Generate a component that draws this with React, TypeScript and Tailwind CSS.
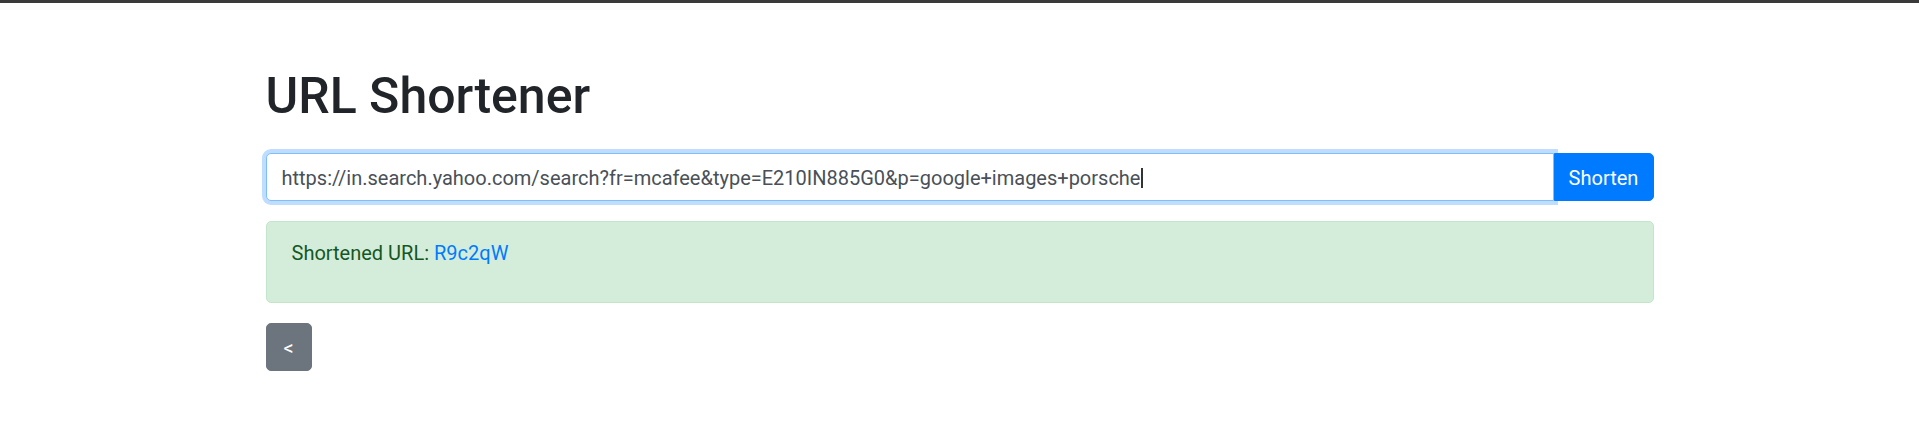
export default function App() {
  return (
    <div className="min-h-[431px] bg-white font-['Roboto',sans-serif] text-[#212529]">
      {/* window edge */}
      <div className="h-[3px] bg-[#3a3a3a]" />

      <div className="mx-auto w-[1388px] pt-[63px]">
        <h1 className="text-[50px] font-medium leading-[60px] text-[#212529]">URL Shortener</h1>

        {/* Input group */}
        <div className="mt-[27px] flex h-[48px]">
          <div className="relative z-10 flex flex-1 items-center rounded-l-[5px] border-[1.25px] border-[#80bdff] bg-white px-[15px] pt-[2px] text-[20px] leading-[30px] text-[#495057] shadow-[0_0_0_4px_rgba(0,123,255,0.25)]">
            <span>https://in.search.yahoo.com/search?fr=mcafee&amp;type=E210IN885G0&amp;p=google+images+porsche</span>
            <span className="ml-[1px] h-[20px] w-[2px] bg-[#333]" />
          </div>
          <button className="w-[100px] rounded-r-[5px] border-[1.25px] border-[#007bff] bg-[#007bff] pt-[2px] text-[20px] leading-[30px] text-white">
            Shorten
          </button>
        </div>

        {/* Result */}
        <div className="mt-[20px] rounded-[5px] border-[1.25px] border-[#c3e6cb] bg-[#d4edda] px-[25px] pb-[34px] pt-[16px] text-[20px] leading-[30px] text-[#155724]">
          Shortened URL: <a className="text-[#007bff]">R9c2qW</a>
        </div>

        <button className="mt-[20px] flex h-[47.5px] w-[46px] items-center justify-center rounded-[5px] border-[1.25px] border-[#6c757d] bg-[#6c757d] pt-[2px] text-[20px] leading-[30px] text-white">
          &lt;
        </button>
      </div>
    </div>
  );
}
